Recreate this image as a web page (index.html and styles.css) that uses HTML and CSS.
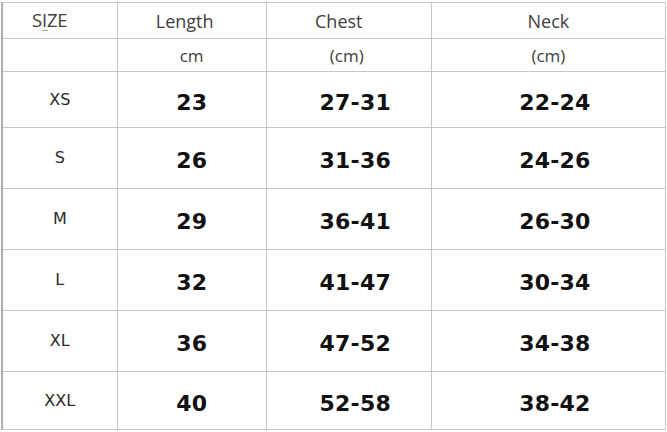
FILE: index.html
```html
<!DOCTYPE html>
<html>
<head>
<meta charset="utf-8">
<link rel="stylesheet" href="styles.css">
</head>
<body>
<table class="chart">
  <colgroup>
    <col class="c1"><col class="c2"><col class="c3"><col class="c4">
  </colgroup>
  <tr class="head">
    <td class="size-h"><span class="sq">SIZE</span></td>
    <td class="len-h">Length</td>
    <td class="chest-h">Chest</td>
    <td>Neck</td>
  </tr>
  <tr class="unit">
    <td></td>
    <td>cm</td>
    <td class="chest-u">(cm)</td>
    <td>(cm)</td>
  </tr>
  <tr class="row first"><td class="sz">XS</td><td class="num">23</td><td class="num wide">27-31</td><td class="num wide">22-24</td></tr>
  <tr class="row"><td class="sz">S</td><td class="num">26</td><td class="num wide">31-36</td><td class="num wide">24-26</td></tr>
  <tr class="row"><td class="sz">M</td><td class="num">29</td><td class="num wide">36-41</td><td class="num wide">26-30</td></tr>
  <tr class="row"><td class="sz">L</td><td class="num">32</td><td class="num wide">41-47</td><td class="num wide">30-34</td></tr>
  <tr class="row"><td class="sz">XL</td><td class="num">36</td><td class="num wide">47-52</td><td class="num wide">34-38</td></tr>
  <tr class="row last"><td class="sz">XXL</td><td class="num">40</td><td class="num wide">52-58</td><td class="num wide">38-42</td></tr>
</table>
</body>
</html>
```

FILE: styles.css
```css
html, body {
  margin: 0;
  padding: 0;
  background: #ffffff;
}
body {
  padding: 2px 0 0 1px;
}
.chart {
  border-collapse: collapse;
  table-layout: fixed;
  width: 665px;
}
.c1 { width: 115px; }
.c2 { width: 149px; }
.c3 { width: 165px; }
.c4 { width: 234px; }
.chart td {
  border: 1px solid #c6c6c6;
  text-align: center;
  vertical-align: middle;
  padding: 0;
  line-height: 1;
}
.chart td:first-child {
  border-left: 2px solid #b0b0b0;
}
.head td {
  height: 35px;
  font-family: "Open Sans", "Noto Sans", sans-serif;
  font-size: 18px;
  color: #404040;
}
.unit td {
  height: 32px;
  font-family: "Open Sans", "Noto Sans", sans-serif;
  font-size: 17px;
  color: #404040;
}
.size-h {
  text-align: left !important;
  padding-left: 29px !important;
}
.sq {
  position: relative;
  font-size: 18.5px;
  letter-spacing: -0.2px;
}
.sq::after {
  content: "";
  position: absolute;
  left: 10px;
  top: 23px;
  width: 6px;
  height: 1px;
  background: #999;
}
.len-h { padding-right: 14px !important; }
.chest-h { padding-right: 20px !important; }
.chest-u { padding-right: 4px !important; }
.row td { height: 54px; }
.row.first td { height: 49px; }
.row.last td { height: 51px; }
.sz {
  font-family: "DejaVu Sans", sans-serif;
  font-size: 16px;
  color: #2a2a2a;
}
.num {
  font-family: "DejaVu Sans", sans-serif;
  font-weight: bold;
  font-size: 22px;
  color: #111;
  letter-spacing: 0.2px;
  padding-top: 6px !important;
}
.num.wide {
  padding-left: 13px !important;
}
```
